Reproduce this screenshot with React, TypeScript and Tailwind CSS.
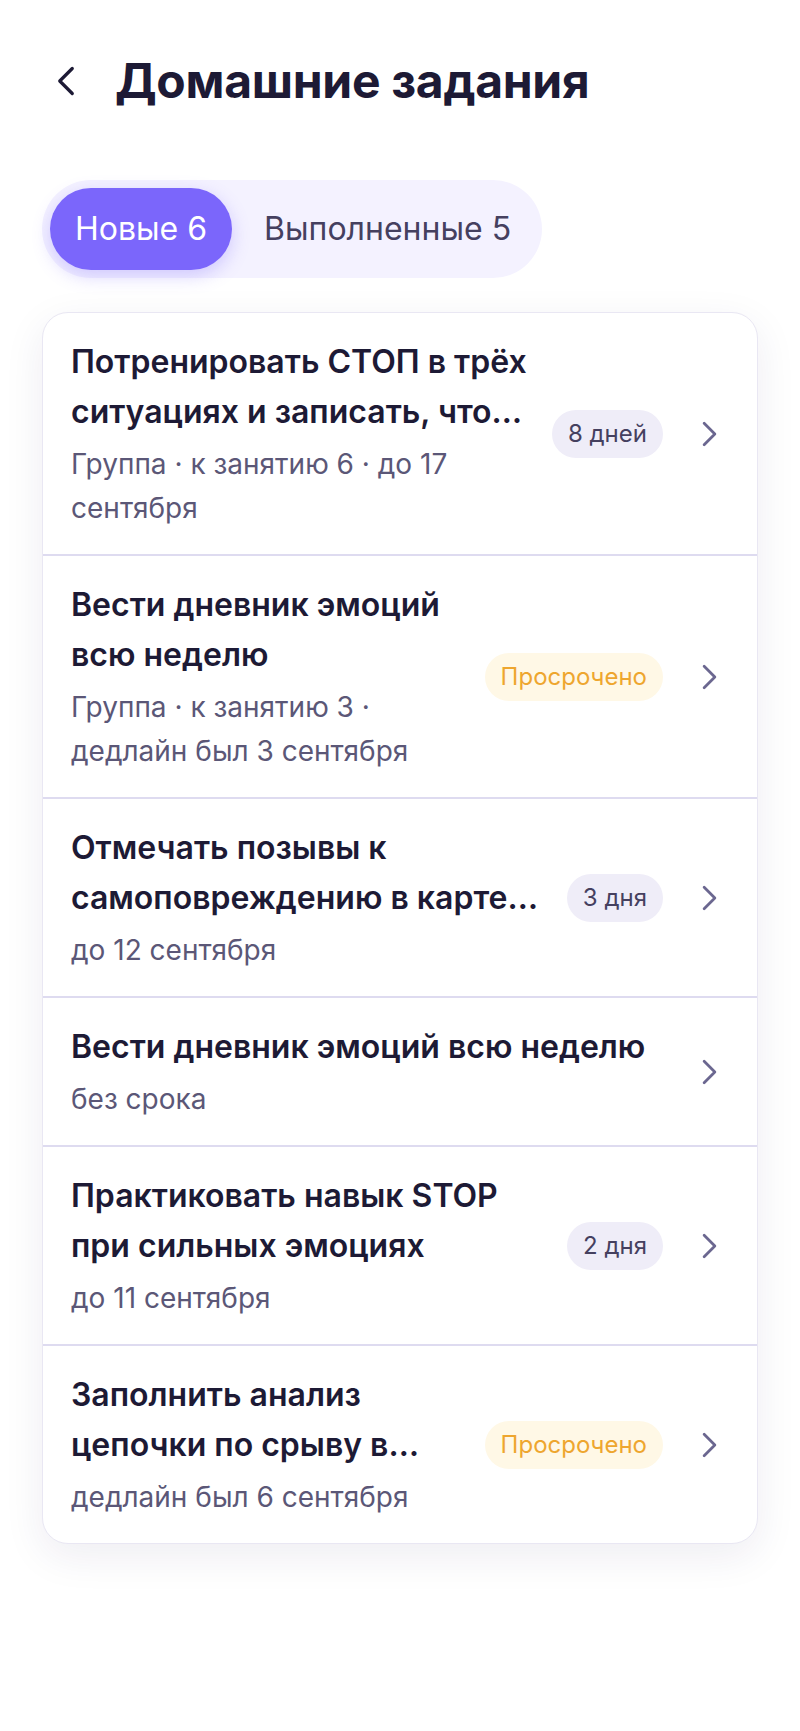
import { useState } from "react";

type Task = {
  title: string;
  meta: string;
  badge?: { text: string; kind: "days" | "late" };
};

const tasks: Task[] = [
  {
    title: "Потренировать СТОП в трёх ситуациях и записать, что получилось",
    meta: "Группа · к занятию 6 · до 17 сентября",
    badge: { text: "8 дней", kind: "days" },
  },
  {
    title: "Вести дневник эмоций всю неделю",
    meta: "Группа · к занятию 3 · дедлайн был 3 сентября",
    badge: { text: "Просрочено", kind: "late" },
  },
  {
    title: "Отмечать позывы к самоповреждению в карте наблюдений",
    meta: "до 12 сентября",
    badge: { text: "3 дня", kind: "days" },
  },
  {
    title: "Вести дневник эмоций всю неделю",
    meta: "без срока",
  },
  {
    title: "Практиковать навык STOP при сильных эмоциях",
    meta: "до 11 сентября",
    badge: { text: "2 дня", kind: "days" },
  },
  {
    title: "Заполнить анализ цепочки по срыву в выходные",
    meta: "дедлайн был 6 сентября",
    badge: { text: "Просрочено", kind: "late" },
  },
];

function Chevron({ left = false, className = "" }: { left?: boolean; className?: string }) {
  return (
    <svg viewBox="0 0 14 24" fill="none" className={className}>
      <path
        d={left ? "M12 2 2 12l10 10" : "M2 2l10 10L2 22"}
        stroke="currentColor"
        strokeWidth="2.6"
        strokeLinecap="round"
        strokeLinejoin="round"
      />
    </svg>
  );
}

export default function App() {
  const [tab, setTab] = useState(0);

  return (
    <div className="min-h-[1731px] bg-white px-[42px] font-['Inter',sans-serif] text-[#1d1a35]">
      <div className="flex items-center pt-[57px]">
        <button className="ml-[15px] flex h-12 w-5 items-center text-[#1d1a35]">
          <Chevron left className="h-[30px] w-[18px]" />
        </button>
        <h1 className="ml-[38px] text-[48px] leading-[48px] font-bold tracking-[-0.3px]">Домашние задания</h1>
      </div>

      <div className="mt-[75px] inline-flex rounded-full bg-[#f4f2ff] p-2">
        <button
          onClick={() => setTab(0)}
          className={
            tab === 0
              ? "h-[82px] rounded-full bg-[#7b66fb] px-[25px] text-[32px] text-white shadow-[0_6px_18px_rgba(123,102,251,0.3)]"
              : "h-[82px] rounded-full px-[25px] text-[32px] text-[#45405f]"
          }
        >
          Новые 6
        </button>
        <button
          onClick={() => setTab(1)}
          className={
            tab === 1
              ? "h-[82px] rounded-full bg-[#7b66fb] pr-[23px] pl-8 text-[32px] text-white shadow-[0_6px_18px_rgba(123,102,251,0.3)]"
              : "h-[82px] rounded-full pr-[23px] pl-8 text-[32px] text-[#45405f]"
          }
        >
          Выполненные 5
        </button>
      </div>

      <div className="mt-[34px] overflow-hidden rounded-[26px] border border-[#e9e7f3] bg-white shadow-[0_12px_40px_rgba(40,30,90,0.08)]">
        {tasks.map((t, i) => (
          <div
            key={i}
            className={`flex items-center py-6 pr-[40px] pl-[28px] ${i > 0 ? "border-t-2 border-[#dedbf0]" : ""}`}
          >
            <div className="min-w-0 flex-1">
              <div className="line-clamp-2 text-[32px] leading-[50px] font-semibold">{t.title}</div>
              <div className="mt-[5px] text-[28px] leading-[44px] text-[#5b5777]">{t.meta}</div>
            </div>
            {t.badge && (
              <span
                className={
                  t.badge.kind === "late"
                    ? "ml-6 shrink-0 rounded-full bg-[#fff8e6] px-4 text-[24px] leading-[48px] text-[#eea62f]"
                    : "ml-6 shrink-0 rounded-full bg-[#efedf8] px-4 text-[24px] leading-[48px] text-[#45405f]"
                }
              >
                {t.badge.text}
              </span>
            )}
            <Chevron className="ml-[39px] h-[26px] w-[15px] shrink-0 text-[#6b6790]" />
          </div>
        ))}
      </div>
    </div>
  );
}
